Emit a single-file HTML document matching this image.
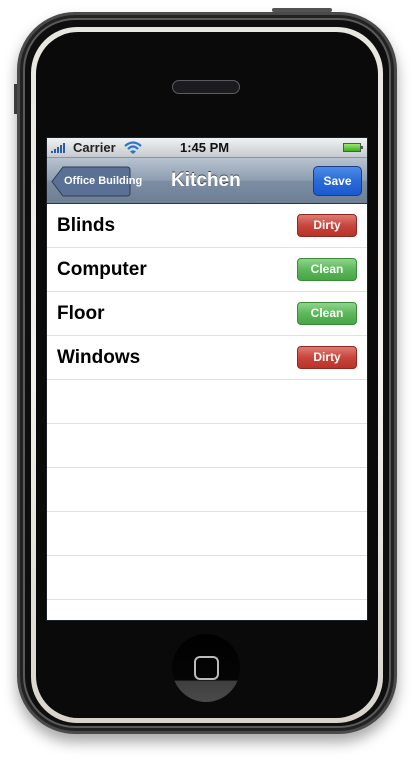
<!DOCTYPE html>
<html><head><style>
*{margin:0;padding:0;box-sizing:border-box}
body{width:414px;height:770px;background:#fff;position:relative;overflow:hidden;font-family:"Liberation Sans",Arial,sans-serif}
.abs{position:absolute}
.outer{left:17px;top:12px;width:380px;height:722px;border-radius:58px;background:#0e0e0e;border:3px solid #4a4a4a;box-shadow:0 8px 14px rgba(0,0,0,.35),inset 0 0 0 3px #222,inset 0 0 0 5px #5a5a5a}
.ring{left:31px;top:27px;width:352px;height:696px;border-radius:46px;background:linear-gradient(#e8e6e0,#f4f2ec 50%,#d8d4cc)}
.inner{left:36px;top:32px;width:342px;height:686px;border-radius:42px;background:#0a0a0a}
.screen{left:47px;top:138px;width:320px;height:482px;background:#fff;overflow:hidden;outline:1px solid #1a2028}
.status{left:0;top:0;width:320px;height:20px;background:linear-gradient(#f0f1f3,#c6cace);border-bottom:1px solid #8e949b;font-size:13px;font-weight:bold;color:#111}
.nav{left:0;top:20px;width:320px;height:46px;background:linear-gradient(#b8c3d0,#8d9db0 50%,#7d8ea3 51%,#6d7f95);border-bottom:1px solid #2d3540}
.row{left:0;width:320px;height:44px;border-bottom:1px solid #e0e0e0;font-size:19px;font-weight:bold;color:#000;padding-left:10px;line-height:43px}
.btn{position:absolute;right:10px;top:10px;width:60px;height:23px;border-radius:4px;color:#fff;font-size:12px;font-weight:bold;text-align:center;line-height:21px}
.dirty{background:linear-gradient(#de7c74,#c8463c 50%,#b83228);border:1px solid #8e2820}
.clean{background:linear-gradient(#8fd48c,#5cb85a 50%,#47a545);border:1px solid #3a8a38}
</style></head><body>
<div class="abs" style="left:272px;top:8px;width:60px;height:4px;background:#555;border-radius:2px"></div>
<div class="abs" style="left:14px;top:84px;width:4px;height:30px;background:#444"></div>
<div class="abs outer"></div>
<div class="abs ring"></div>
<div class="abs inner"></div>
<div class="abs" style="left:172px;top:80px;width:68px;height:14px;border-radius:7px;background:#1c1c20;border:1px solid #5a5c62"></div>
<div class="abs" style="left:172px;top:634px;width:68px;height:68px;border-radius:50%;background:linear-gradient(#000 0%,#050505 68%,#3e3e3e 69%,#4a4a4a)"></div>
<div class="abs" style="left:194px;top:656px;width:25px;height:24px;border-radius:6px;border:2px solid #bbb"></div>
<div class="abs screen">
 <div class="abs status">
  <svg class="abs" style="left:4px;top:5px" width="20" height="10"><rect x="0" y="8" width="2" height="2" fill="#2a5ca8"/><rect x="3" y="6" width="2" height="4" fill="#2a5ca8"/><rect x="6" y="4" width="2" height="6" fill="#2a5ca8"/><rect x="9" y="2" width="2" height="8" fill="#2a5ca8"/><rect x="12" y="0" width="2" height="10" fill="#2a5ca8"/></svg>
  <span class="abs" style="left:26px;top:2px;color:#222">Carrier</span>
  <svg class="abs" style="left:77px;top:3px" width="18" height="14" viewBox="0 0 18 14"><path d="M1 5 Q9 -2 17 5" stroke="#2a74d0" stroke-width="2.2" fill="none"/><path d="M4 8 Q9 3 14 8" stroke="#2a74d0" stroke-width="2.2" fill="none"/><path d="M9 13 L6 10.5 Q9 8 12 10.5 Z" fill="#2a74d0"/></svg>
  <span class="abs" style="left:133px;top:2px">1:45 PM</span>
  <div class="abs" style="left:296px;top:5px;width:18px;height:9px;border:1px solid #555;background:linear-gradient(#9be870,#3cb020)"></div>
  <div class="abs" style="left:314px;top:8px;width:2px;height:3px;background:#555"></div>
 </div>
 <div class="abs nav">
  <svg class="abs" style="left:4px;top:8px" width="80" height="31"><path d="M12 1 H76 Q79 1 79 4 V27 Q79 30 76 30 H12 L1 15.5 Z" fill="#5a7195" stroke="#2e3e55"/></svg>
  <span class="abs" style="left:17px;top:17px;font-size:11px;font-weight:bold;color:#fff">Office Building</span>
  <span class="abs" style="left:124px;top:12px;font-size:19px;font-weight:bold;color:#fff;text-shadow:0 -1px #444">Kitchen</span>
  <div class="abs" style="left:266px;top:8px;width:49px;height:30px;border-radius:5px;background:linear-gradient(#4b8ce8,#2a6ad8 50%,#1a5ad0);border:1px solid #1c3e80;color:#fff;font-size:12px;font-weight:bold;text-align:center;line-height:28px">Save</div>
 </div>
 <div class="abs row" style="top:66px">Blinds<div class="btn dirty">Dirty</div></div>
 <div class="abs row" style="top:110px">Computer<div class="btn clean">Clean</div></div>
 <div class="abs row" style="top:154px">Floor<div class="btn clean">Clean</div></div>
 <div class="abs row" style="top:198px">Windows<div class="btn dirty">Dirty</div></div>
 <div class="abs row" style="top:242px"></div>
 <div class="abs row" style="top:286px"></div>
 <div class="abs row" style="top:330px"></div>
 <div class="abs row" style="top:374px"></div>
 <div class="abs row" style="top:418px"></div>
</div>
</body></html>
